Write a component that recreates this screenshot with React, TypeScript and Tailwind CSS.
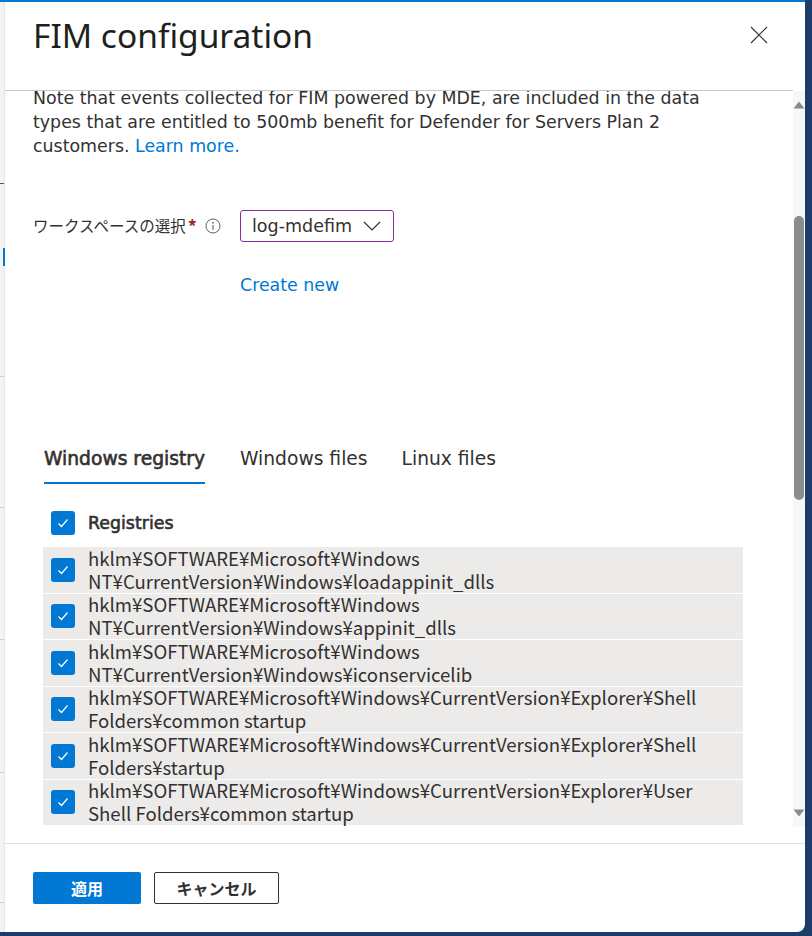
import React from 'react'

const BODY = '"DejaVu Sans", "Noto Sans CJK JP", sans-serif'
const JP = '"Noto Sans CJK JP", "Noto Sans", sans-serif'

const registries = [
  ['hklm¥SOFTWARE¥Microsoft¥Windows', 'NT¥CurrentVersion¥Windows¥loadappinit_dlls'],
  ['hklm¥SOFTWARE¥Microsoft¥Windows', 'NT¥CurrentVersion¥Windows¥appinit_dlls'],
  ['hklm¥SOFTWARE¥Microsoft¥Windows', 'NT¥CurrentVersion¥Windows¥iconservicelib'],
  ['hklm¥SOFTWARE¥Microsoft¥Windows¥CurrentVersion¥Explorer¥Shell', 'Folders¥common startup'],
  ['hklm¥SOFTWARE¥Microsoft¥Windows¥CurrentVersion¥Explorer¥Shell', 'Folders¥startup'],
  ['hklm¥SOFTWARE¥Microsoft¥Windows¥CurrentVersion¥Explorer¥User', 'Shell Folders¥common startup'],
]

function Check() {
  return (
    <div className="w-6 h-6 shrink-0 rounded-[3px] bg-[#0078d4] flex items-center justify-center">
      <svg width="14" height="14" viewBox="0 0 14 14" fill="none">
        <path d="M2.5 7.5 L5.5 10.5 L11.5 3.5" stroke="white" strokeWidth="1.2" />
      </svg>
    </div>
  )
}

function LeftStrip() {
  return (
    <div className="w-[5px] shrink-0 bg-[#f3f3f3] flex flex-col border-r border-[#e6e6e6]">
      <div className="h-[181px] shrink-0" />
      <div className="h-px w-[4px] bg-[#555] shrink-0" />
      <div className="h-[64px] shrink-0" />
      <div className="h-[18px] w-[2px] ml-[3px] bg-[#0078d4] shrink-0" />
      <div className="h-[111px] shrink-0 border-b border-[#cfcfcf]" />
      <div className="h-[131px] shrink-0 border-b border-[#cfcfcf]" />
      <div className="h-[132px] shrink-0 border-b border-[#cfcfcf]" />
      <div className="h-[133px] shrink-0 border-b border-[#cfcfcf]" />
      <div className="h-[130px] shrink-0 border-b border-[#cfcfcf]" />
    </div>
  )
}

function Scrollbar() {
  return (
    <div className="w-3 shrink-0 bg-[#f7f7f7] flex flex-col items-center">
      <svg width="12" height="8" viewBox="0 0 12 8" className="mt-[10px]">
        <path d="M6 0.5 L11.5 7.5 L0.5 7.5 Z" fill="#8a8a8a" />
      </svg>
      <div className="w-[10px] h-[284px] mt-[107px] rounded-full bg-[#8c8c8c]" />
      <div className="flex-1" />
      <svg width="12" height="8" viewBox="0 0 12 8" className="mb-[10px]">
        <path d="M0.5 0.5 L11.5 0.5 L6 7.5 Z" fill="#8a8a8a" />
      </svg>
    </div>
  )
}

export default function App() {
  return (
    <div className="w-[812px] h-[936px] bg-[#1c3c6c] overflow-hidden">
      <div className="w-[805px] flex flex-col">
        <div className="h-[2px] bg-[#0078d4]" />
        <div className="h-[930px] flex">
          <LeftStrip />
          <div className="flex-1 bg-white rounded-br-[8px] flex flex-col">
            {/* header */}
            <div className="h-[88px] shrink-0 flex items-start justify-between pl-[28px] pr-[37px] pt-[11px]">
              <h1 className="text-[33.5px] leading-[44px] text-[#201f1e]" style={{ fontFamily: '"Noto Sans", sans-serif' }}>
                FIM configuration
              </h1>
              <svg width="18" height="18" viewBox="0 0 18 18" className="mt-[13px]">
                <path d="M1 1 L17 17 M17 1 L1 17" stroke="#333" strokeWidth="1.2" />
              </svg>
            </div>
            <div className="h-px bg-[#c8c8c8] mr-[12px]" />
            {/* body */}
            <div className="h-[736px] shrink-0 flex overflow-hidden">
              <div className="flex-1 overflow-hidden pl-[28px]" style={{ fontFamily: BODY }}>
                <p className="mt-[-5px] text-[17.4px] leading-[24px] text-[#323130] whitespace-nowrap">
                  Note that events collected for FIM powered by MDE, are included in the data
                  <br />
                  types that are entitled to 500mb benefit for Defender for Servers Plan 2
                  <br />
                  customers. <span className="text-[#0078d4]">Learn more.</span>
                </p>
                <div className="mt-[52px] flex items-center h-[32px]">
                  <span className="w-[172px] shrink-0 text-[15.5px] text-[#323130] flex items-center" style={{ fontFamily: JP }}>
                    ワークスペースの選択<span className="ml-[2px] text-[18px] font-bold text-[#a4262c]">*</span>
                  </span>
                  <svg width="16" height="16" viewBox="0 0 16 16" className="shrink-0">
                    <circle cx="8" cy="8" r="7" fill="none" stroke="#605e5c" strokeWidth="1" />
                    <circle cx="8" cy="4.8" r="0.9" fill="#605e5c" />
                    <path d="M8 7 V11.8" stroke="#605e5c" strokeWidth="1.1" />
                  </svg>
                  <div className="ml-[19px] w-[154px] h-[32px] border border-[#8a2da5] rounded-[3px] flex items-center justify-between pl-[11px] pr-[12px]">
                    <span className="text-[17.5px] text-[#323130]">log-mdefim</span>
                    <svg width="18" height="10" viewBox="0 0 18 10">
                      <path d="M1 1 L9 9 L17 1" fill="none" stroke="#323130" strokeWidth="1.2" />
                    </svg>
                  </div>
                </div>
                <div className="mt-[31px] pl-[207px] text-[17.4px] leading-[24px] text-[#0078d4]">Create new</div>
                <div className="mt-[148px] flex items-end pl-[11px] text-[18.7px] text-[#323130]">
                  <div className="pb-[9px] border-b-2 border-[#0078d4] [-webkit-text-stroke:0.6px_#323130]">Windows registry</div>
                  <div className="ml-[35px] pb-[11px]">Windows files</div>
                  <div className="ml-[34px] pb-[11px]">Linux files</div>
                </div>
                <div className="mt-[27px] flex items-center gap-[13px] pl-[18px] h-6">
                  <Check />
                  <span className="text-[17.4px] text-[#323130] [-webkit-text-stroke:0.6px_#323130]">Registries</span>
                </div>
                <div className="mt-[12px] mr-[50px] ml-[10px] flex flex-col gap-px" style={{ fontFamily: JP }}>
                  {registries.map((r, i) => (
                    <div key={i} className="h-[45.5px] bg-[#edebe9] flex items-center gap-[13px] pl-[8px]">
                      <Check />
                      <div className="text-[18.6px] leading-[23px] text-[#323130] whitespace-nowrap -mt-[2px]">
                        <div>{r[0]}</div>
                        <div>{r[1]}</div>
                      </div>
                    </div>
                  ))}
                </div>
              </div>
              <Scrollbar />
            </div>
            {/* footer */}
            <div className="h-[16px] shrink-0" />
            <div className="h-px bg-[#e1dfdd]" />
            <div className="pt-[28px] pl-[28px] flex gap-[13px]" style={{ fontFamily: JP }}>
              <button className="w-[108px] h-[32px] rounded-[2px] bg-[#0078d4] text-white text-[16px] font-bold">適用</button>
              <button className="w-[125px] h-[32px] rounded-[2px] border border-[#323130] text-[#323130] text-[16px] font-bold">キャンセル</button>
            </div>
          </div>
        </div>
      </div>
    </div>
  )
}
